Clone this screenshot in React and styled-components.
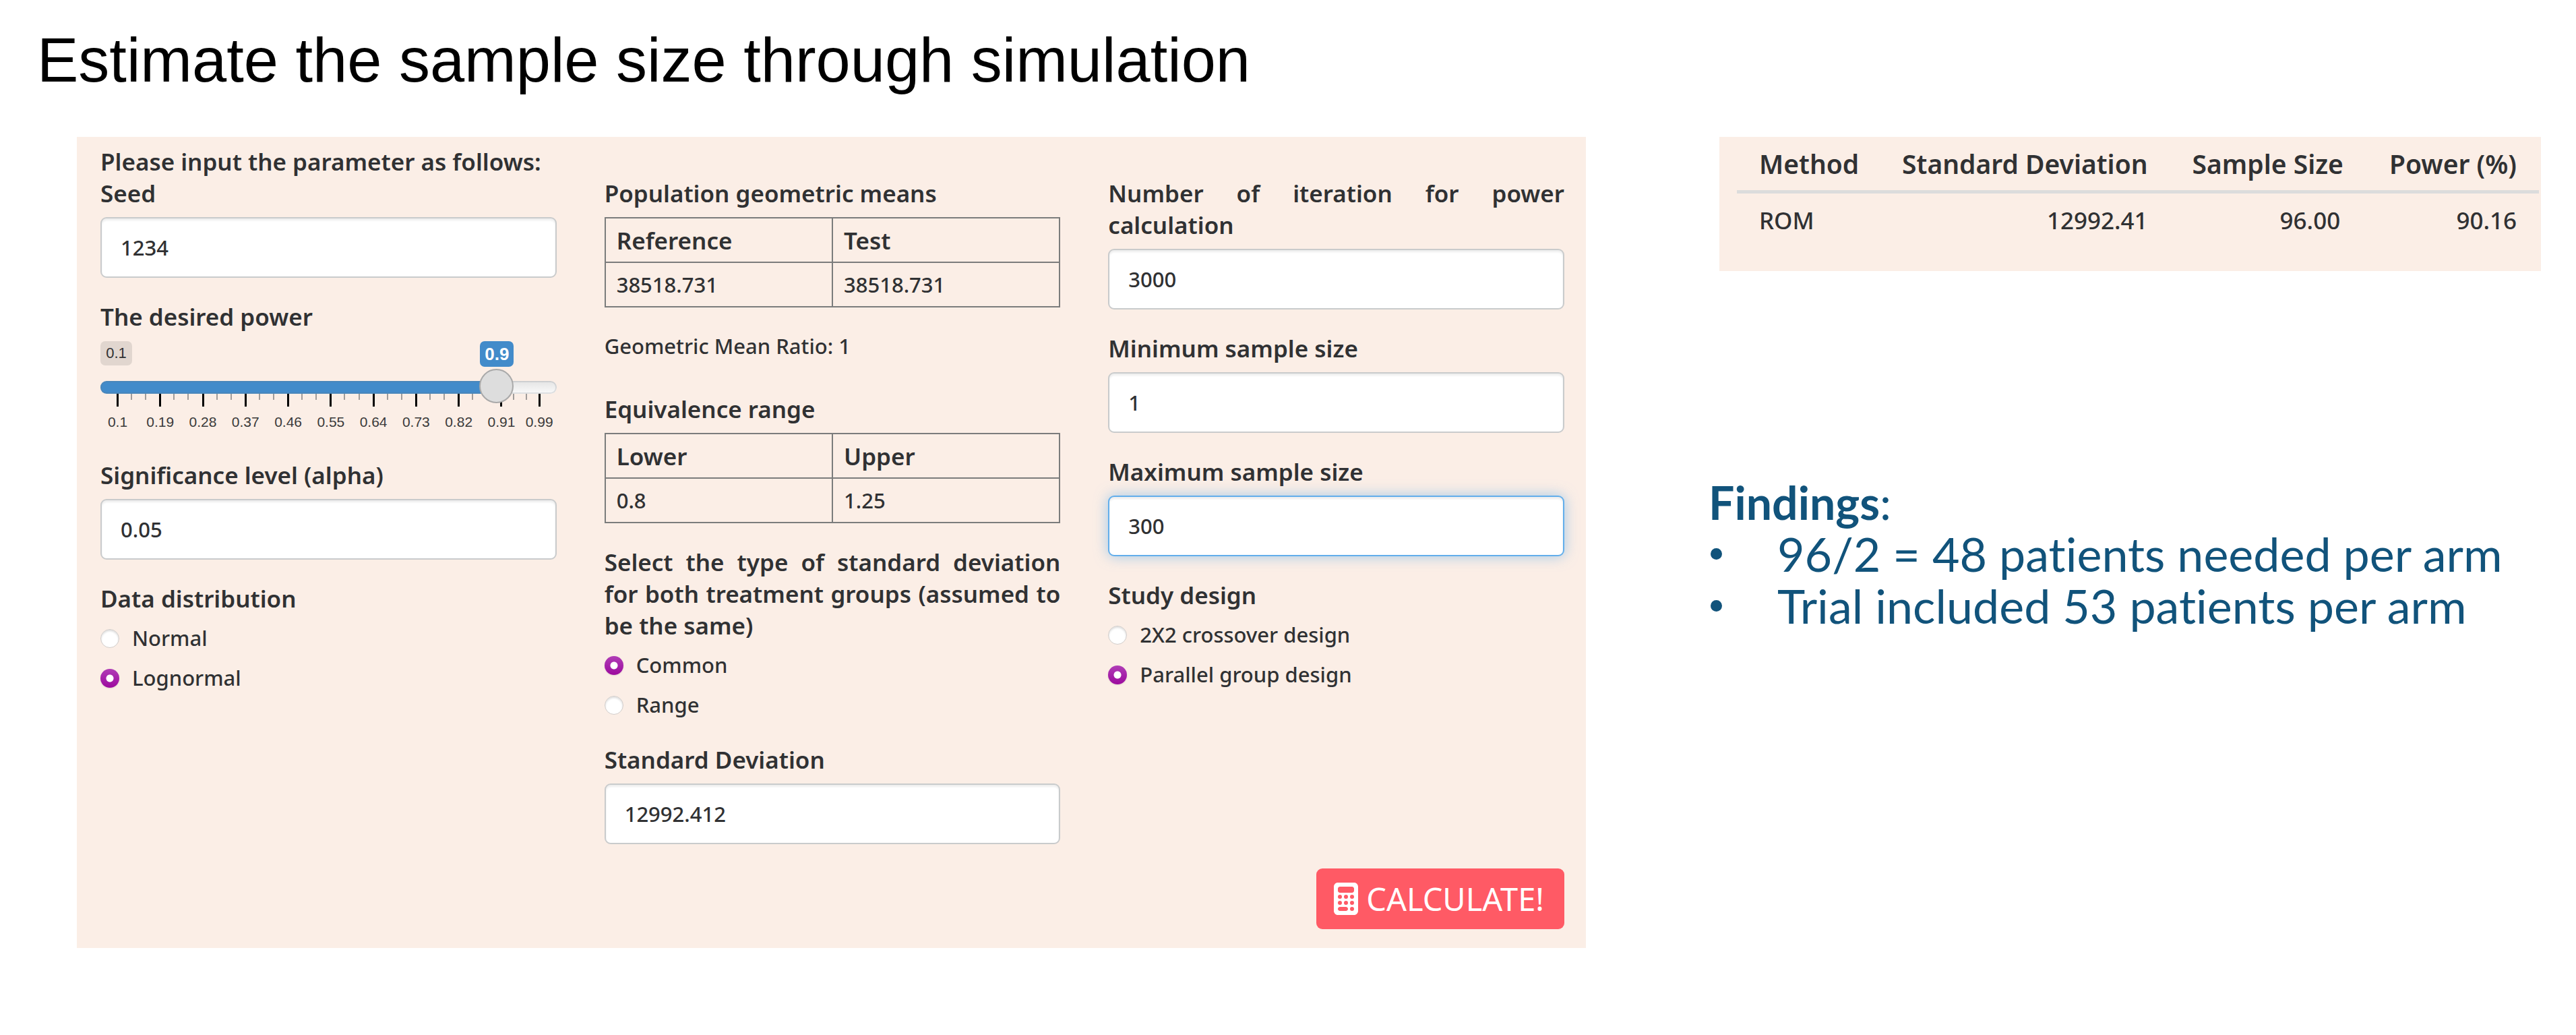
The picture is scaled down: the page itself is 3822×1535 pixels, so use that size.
import React, { useState } from "react";
import styled, { createGlobalStyle, css } from "styled-components";
import { FaCalculator } from "react-icons/fa6";

const GlobalStyle = createGlobalStyle`
  * { box-sizing: border-box; }
  body {
    margin: 0;
    background: #ffffff;
    color: #303133;
    font-family: "Noto Sans", "Open Sans", sans-serif;
    font-size: 31px;
    font-weight: 500;
    line-height: 47px;
  }
`;

const Slide = styled.div`
  padding: 36px 52px 128px 55px;
`;

const Title = styled.h1`
  margin: 0 0 61px;
  font-family: "Liberation Sans", Arial, sans-serif;
  font-size: 92px;
  font-weight: 400;
  line-height: 106px;
  color: #000000;
`;

const Content = styled.main`
  display: grid;
  grid-template-columns: minmax(0, 2239fr) minmax(0, 1235fr);
  column-gap: 182px;
  align-items: start;
  padding-left: 59px;
`;

const panelSurface = css`
  background: #fbeee6;
`;

const FormPanel = styled.form`
  ${panelSurface}
  padding: 13px 32px 28px 35px;
`;

const labelText = css`
  font-size: 35px;
  font-weight: 600;
  line-height: 47px;
`;

const Intro = styled.p`
  ${labelText}
  margin: 0;
`;

const Columns = styled.div`
  display: grid;
  grid-template-columns: repeat(3, minmax(0, 1fr));
  column-gap: 71px;
`;

const Column = styled.div`
  display: flex;
  flex-direction: column;
  gap: 34px;
`;

const Field = styled.div`
  display: flex;
  flex-direction: column;
  gap: 12px;
`;

const Label = styled.label`
  ${labelText}
  text-align: justify;
`;

const TextInput = styled.input`
  width: 100%;
  height: 90px;
  padding: 0 28px;
  border: 2px solid #c9cbcc;
  border-radius: 9px;
  background: #ffffff;
  box-shadow: inset 0 3px 3px rgba(0, 0, 0, 0.07);
  color: inherit;
  font: inherit;
  outline: none;

  ${(p) =>
    p.$active &&
    css`
      border-color: #62aeeb;
      box-shadow: inset 0 3px 3px rgba(0, 0, 0, 0.07), 0 0 20px rgba(102, 175, 233, 0.6);
    `}
`;

const RadioSet = styled.fieldset`
  margin: 0;
  padding: 0;
  border: 0;
  min-width: 0;
`;

const Legend = styled.legend`
  ${labelText}
  width: 100%;
  padding: 0;
  text-align: justify;
`;

const RadioList = styled.div`
  display: flex;
  flex-direction: column;
  gap: 12px;
  padding-top: 12px;
`;

const RadioLabel = styled.label`
  display: flex;
  align-items: center;
  gap: 19px;
`;

const Radio = styled.input`
  appearance: none;
  flex: none;
  width: 28px;
  height: 28px;
  margin: 0;
  border: 1px solid #d2cdca;
  border-radius: 50%;
  background: #ffffff;
  box-shadow: inset 0 2px 3px rgba(0, 0, 0, 0.14);

  &:checked {
    border: 0;
    background: radial-gradient(circle, #ffffff 0 5px, transparent 6px),
      linear-gradient(#b03cb6, #9c0a9e);
    box-shadow: 0 1px 2px rgba(0, 0, 0, 0.12);
  }
`;

const SliderBox = styled.div`
  display: flex;
  flex-direction: column;
  height: 142px;
`;

const BubbleLane = styled.div`
  position: relative;
  height: 44px;
  padding-top: 1px;
  font-family: "Liberation Sans", Arial, sans-serif;
  font-weight: 400;
`;

const MinBubble = styled.span`
  display: block;
  width: 47px;
  border-radius: 7px;
  background: #e1d6cf;
  font-size: 22px;
  line-height: 36px;
  text-align: center;
`;

const ValueTrack = styled.div`
  position: absolute;
  inset: 1px 25px auto;
`;

const ValueBubble = styled.output`
  position: absolute;
  width: 50px;
  margin-left: -25px;
  border-radius: 7px;
  background: #428bca;
  color: #ffffff;
  font-size: 26px;
  font-weight: 700;
  line-height: 38px;
  text-align: center;
`;

const trackStyle = css`
  height: 19px;
  border-radius: 9px;
`;

const Range = styled.input`
  appearance: none;
  position: relative;
  width: 100%;
  height: 51px;
  margin: 0 0 -16px;
  background: transparent;
  flex: none;

  &::-webkit-slider-runnable-track {
    ${trackStyle}
    background: linear-gradient(#428bca, #428bca) left / 87% 100% no-repeat,
      linear-gradient(#e4e4e4, #fafafa);
    box-shadow: inset 0 0 0 2px rgba(110, 120, 130, 0.2);
  }

  &::-webkit-slider-thumb {
    appearance: none;
    width: 51px;
    height: 51px;
    margin-top: -18px;
    border: 2px solid #a9a9a9;
    border-radius: 50%;
    background: #dddddd;
  }
`;

const Scale = styled.div`
  display: flex;
  padding: 0 24px;
  color: #3a3a3a;
  font-family: "Liberation Sans", Arial, sans-serif;
  font-size: 21px;
  font-weight: 400;
  line-height: 24px;
`;

const Segment = styled.div`
  flex: ${(p) => p.$span} 1 0;
  display: grid;
  grid-template-columns: repeat(3, 1fr);
  min-width: 0;
`;

const TickCell = styled.div`
  display: flex;
  flex-direction: column;
  width: 3px;
`;

const Tick = styled.i`
  width: ${(p) => (p.$minor ? 2 : 3)}px;
  height: ${(p) => (p.$minor ? 9 : 19)}px;
  background: ${(p) => (p.$minor ? "#a09c9a" : "#000000")};
`;

const TickLabel = styled.span`
  display: flex;
  justify-content: center;
  margin-top: 11px;
  white-space: nowrap;
`;

const Grid = styled.table`
  width: 100%;
  border-collapse: collapse;
  table-layout: fixed;

  th,
  td {
    height: 66px;
    padding: 0 16px;
    border: 2px solid #7b7c7c;
    text-align: left;
  }

  th {
    ${labelText}
  }
`;

const GridTitle = styled.div`
  ${labelText}
`;

const Note = styled.p`
  margin: 0 0 12px;
`;

const Actions = styled.div`
  display: flex;
  justify-content: flex-end;
  margin-top: 36px;
`;

const CalculateButton = styled.button`
  display: flex;
  align-items: center;
  gap: 12px;
  height: 90px;
  padding: 0 30px 0 26px;
  border: 0;
  border-radius: 9px;
  background: #ff5a65;
  color: #ffffff;
  font-family: inherit;
  font-size: 47px;
  line-height: 1;

  svg {
    width: 36px;
    height: 48px;
  }
`;

const ResultPanel = styled.section`
  ${panelSurface}
  margin-left: 16px;
  padding: 2px 3px 52px 26px;
`;

const ResultTable = styled.table`
  width: 100%;
  border-collapse: collapse;
  table-layout: fixed;

  th,
  td {
    padding: 14px 33px;
    text-align: right;
    white-space: nowrap;
  }

  th {
    padding-bottom: 16px;
    border-bottom: 5px solid #dcdcdc;
    font-size: 39px;
    font-weight: 600;
  }

  td {
    padding-top: 16px;
    padding-bottom: 0;
    font-size: 35px;
  }

  th:first-child,
  td:first-child {
    text-align: left;
  }
`;

const Col = styled.col`
  width: ${(p) => p.$share}%;
`;

const Findings = styled.section`
  margin-top: 304px;
  color: #11537b;
  font-family: Lato, sans-serif;
  font-size: 70px;
  font-weight: 400;
  line-height: 77px;
  font-variant-ligatures: none;
`;

const FindingsTitle = styled.h2`
  margin: 0;
  font-size: 68px;
  font-weight: 700;
  line-height: inherit;
`;

const Colon = styled.span`
  font-weight: 400;
`;

const FindingsList = styled.ul`
  margin: 0;
  padding: 0 0 0 3px;
  list-style: none;
`;

const Finding = styled.li`
  display: flex;
  align-items: center;
  gap: 82px;
  white-space: nowrap;

  &::before {
    content: "";
    flex: none;
    width: 17px;
    height: 17px;
    border-radius: 50%;
    background: currentColor;
  }
`;

const MIN = 0.1;
const MAX = 0.99;
const STOPS = [0.1, 0.19, 0.28, 0.37, 0.46, 0.55, 0.64, 0.73, 0.82, 0.91, 0.99];

function TextField({ id, label, value, active }) {
  return (
    <Field>
      <Label htmlFor={id}>{label}</Label>
      <TextInput id={id} type="text" defaultValue={value} $active={active} />
    </Field>
  );
}

function RadioField({ name, label, options, selected }) {
  return (
    <RadioSet>
      <Legend>{label}</Legend>
      <RadioList>
        {options.map((option) => (
          <RadioLabel key={option}>
            <Radio type="radio" name={name} value={option} defaultChecked={option === selected} />
            {option}
          </RadioLabel>
        ))}
      </RadioList>
    </RadioSet>
  );
}

function MajorTick({ value }) {
  return (
    <TickCell>
      <Tick />
      <TickLabel>{value}</TickLabel>
    </TickCell>
  );
}

function PowerSlider() {
  const [power, setPower] = useState(0.9);
  return (
    <Field>
      <Label htmlFor="power">The desired power</Label>
      <SliderBox>
        <BubbleLane>
          <MinBubble>{MIN}</MinBubble>
          <ValueTrack>
            <ValueBubble htmlFor="power" style={{ left: `${((power - MIN) / (MAX - MIN)) * 100}%` }}>
              {power}
            </ValueBubble>
          </ValueTrack>
        </BubbleLane>
        <Range
          id="power"
          type="range"
          min={MIN}
          max={MAX}
          step={0.01}
          value={power}
          onChange={(e) => setPower(Number(e.target.value))}
        />
        <Scale>
          {STOPS.slice(0, -1).map((stop, i) => (
            <Segment key={stop} $span={Math.round((STOPS[i + 1] - stop) * 100)}>
              <MajorTick value={stop} />
              <Tick $minor />
              <Tick $minor />
            </Segment>
          ))}
          <MajorTick value={MAX} />
        </Scale>
      </SliderBox>
    </Field>
  );
}

function PairTable({ title, heads, values }) {
  return (
    <Field>
      <GridTitle>{title}</GridTitle>
      <Grid aria-label={title}>
        <thead>
          <tr>
            {heads.map((h) => (
              <th key={h}>{h}</th>
            ))}
          </tr>
        </thead>
        <tbody>
          <tr>
            {values.map((v, i) => (
              <td key={i}>{v}</td>
            ))}
          </tr>
        </tbody>
      </Grid>
    </Field>
  );
}

export default function App() {
  return (
    <Slide>
      <GlobalStyle />
      <Title>Estimate the sample size through simulation</Title>
      <Content>
        <FormPanel onSubmit={(e) => e.preventDefault()}>
          <Intro>Please input the parameter as follows:</Intro>
          <Columns>
            <Column>
              <TextField id="seed" label="Seed" value="1234" />
              <PowerSlider />
              <TextField id="alpha" label="Significance level (alpha)" value="0.05" />
              <RadioField
                name="distribution"
                label="Data distribution"
                options={["Normal", "Lognormal"]}
                selected="Lognormal"
              />
            </Column>
            <Column>
              <PairTable
                title="Population geometric means"
                heads={["Reference", "Test"]}
                values={["38518.731", "38518.731"]}
              />
              <Note>Geometric Mean Ratio: 1</Note>
              <PairTable title="Equivalence range" heads={["Lower", "Upper"]} values={["0.8", "1.25"]} />
              <RadioField
                name="deviation-type"
                label={"Select the type of standard deviation for\u00a0both treatment groups (assumed to be\u00a0the\u00a0same)"}
                options={["Common", "Range"]}
                selected="Common"
              />
              <TextField id="sd" label="Standard Deviation" value="12992.412" />
            </Column>
            <Column>
              <TextField id="iterations" label="Number of iteration for power calculation" value="3000" />
              <TextField id="min-size" label="Minimum sample size" value="1" />
              <TextField id="max-size" label="Maximum sample size" value="300" active />
              <RadioField
                name="design"
                label="Study design"
                options={["2X2 crossover design", "Parallel group design"]}
                selected="Parallel group design"
              />
            </Column>
          </Columns>
          <Actions>
            <CalculateButton type="submit">
              <FaCalculator aria-hidden="true" />
              CALCULATE!
            </CalculateButton>
          </Actions>
        </FormPanel>
        <div>
          <ResultPanel>
            <ResultTable>
              <colgroup>
                <Col $share={17} />
                <Col $share={37} />
                <Col $share={24} />
                <Col $share={22} />
              </colgroup>
              <thead>
                <tr>
                  <th>Method</th>
                  <th>Standard Deviation</th>
                  <th>Sample Size</th>
                  <th>Power (%)</th>
                </tr>
              </thead>
              <tbody>
                <tr>
                  <td>ROM</td>
                  <td>12992.41</td>
                  <td>96.00</td>
                  <td>90.16</td>
                </tr>
              </tbody>
            </ResultTable>
          </ResultPanel>
          <Findings>
            <FindingsTitle>
              Findings<Colon>:</Colon>
            </FindingsTitle>
            <FindingsList>
              <Finding>96/2 = 48 patients needed per arm</Finding>
              <Finding>Trial included 53 patients per arm</Finding>
            </FindingsList>
          </Findings>
        </div>
      </Content>
    </Slide>
  );
}
